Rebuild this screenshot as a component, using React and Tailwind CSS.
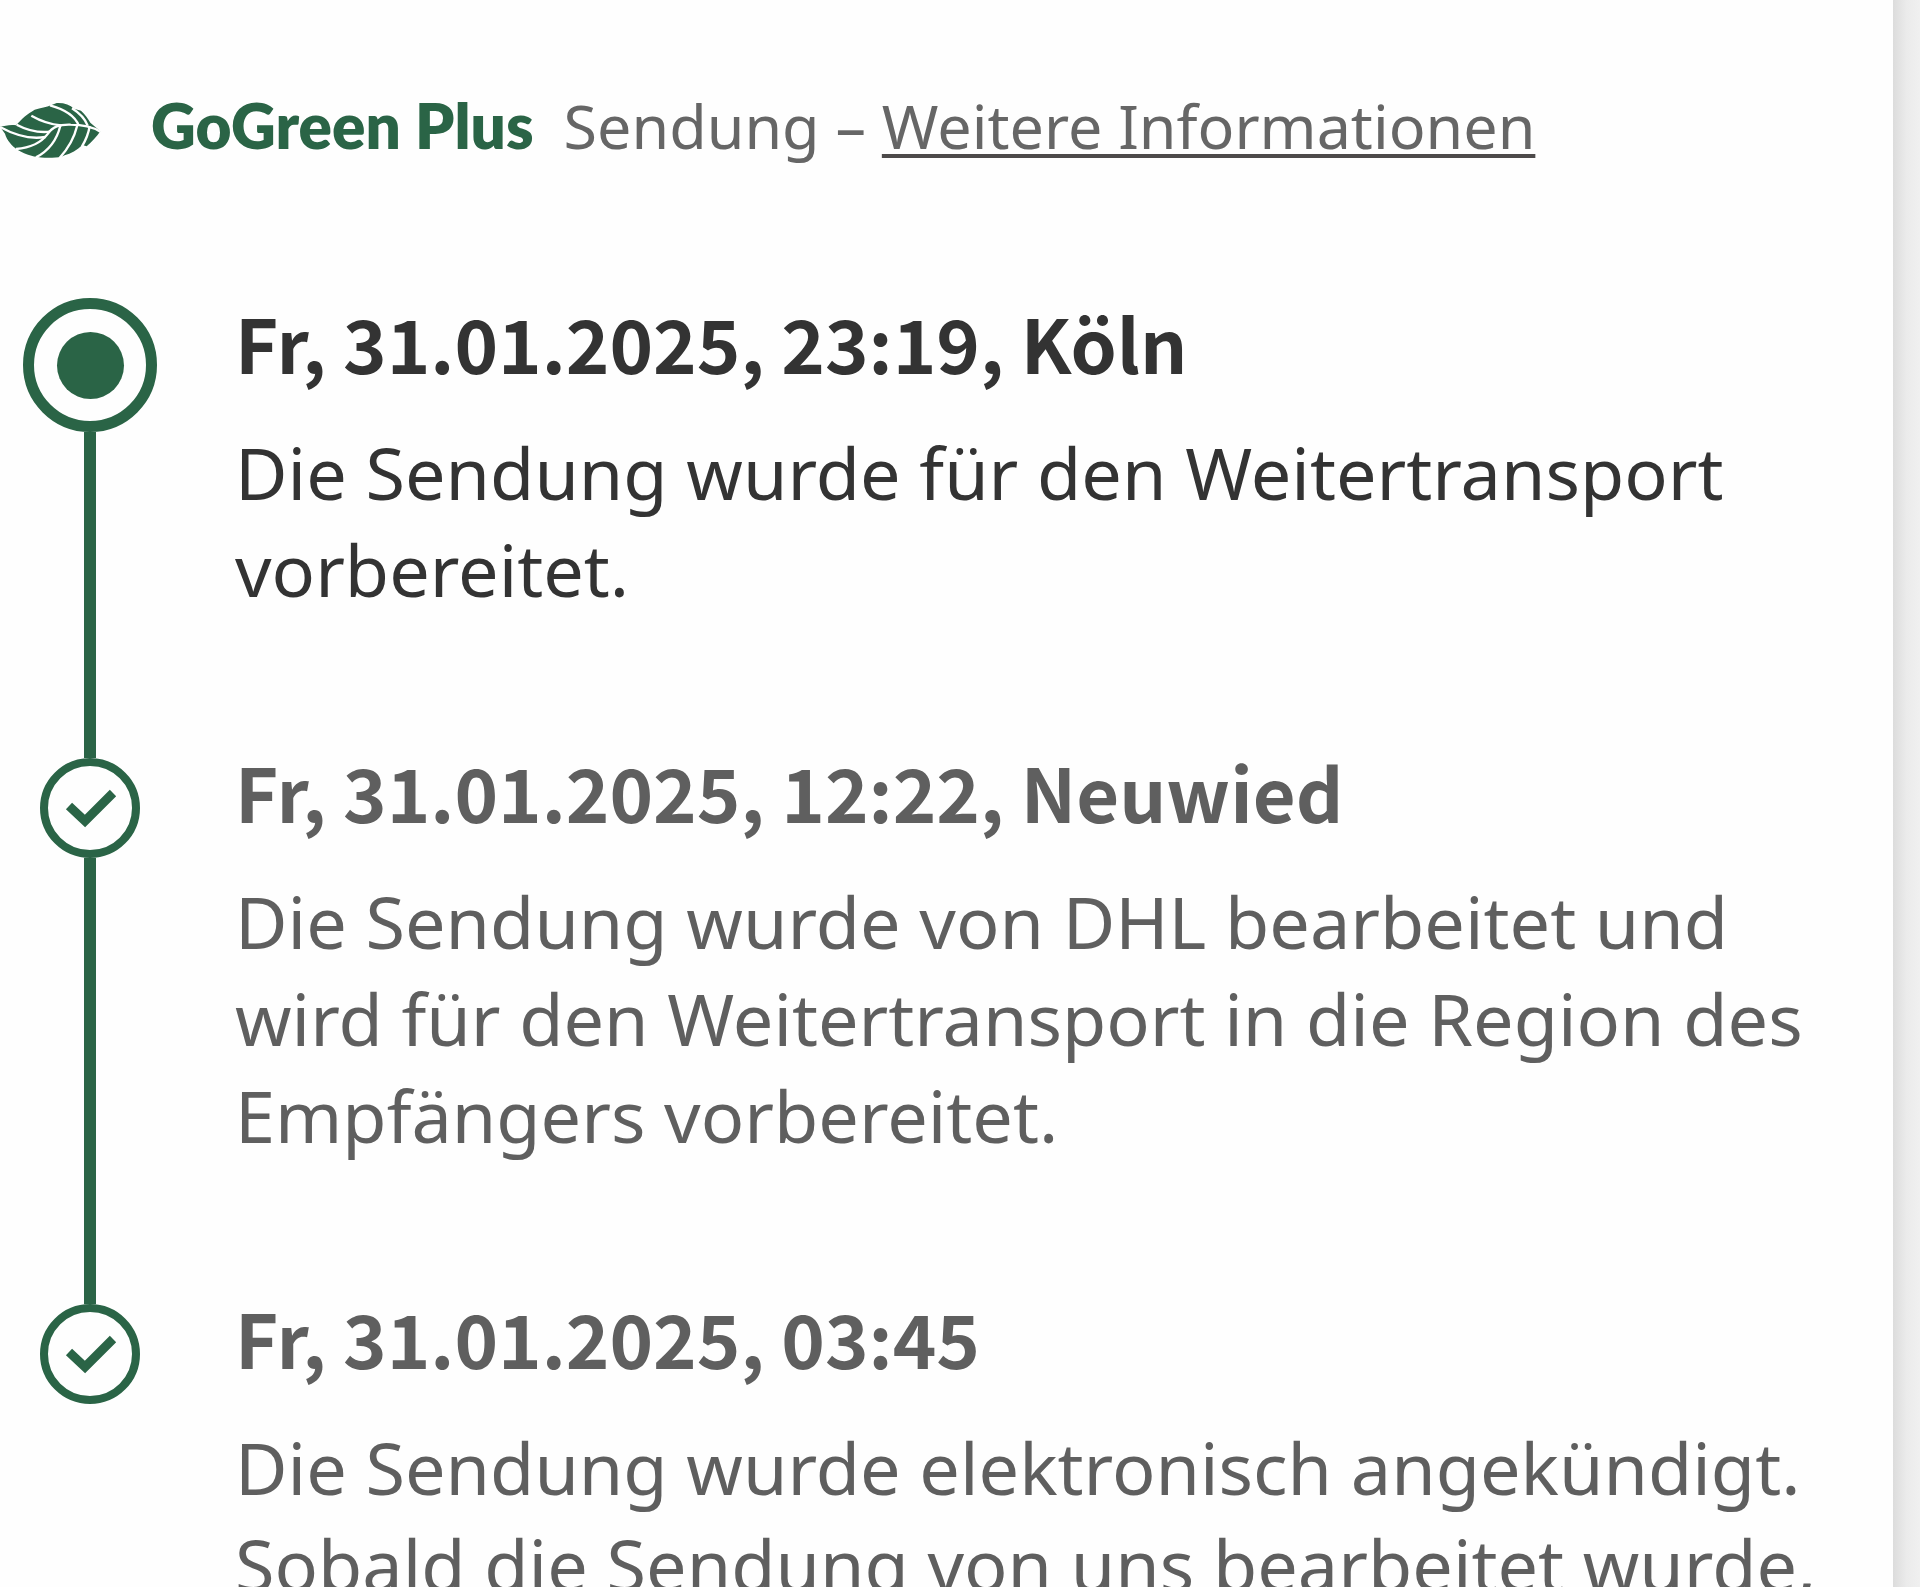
import React from 'react';

const events = [
  {
    time: 'Fr, 31.01.2025, 23:19, Köln',
    text: 'Die Sendung wurde für den Weitertransport vorbereitet.',
    current: true,
  },
  {
    time: 'Fr, 31.01.2025, 12:22, Neuwied',
    text: 'Die Sendung wurde von DHL bearbeitet und wird für den Weitertransport in die Region des Empfängers vorbereitet.',
  },
  {
    time: 'Fr, 31.01.2025, 03:45',
    text: 'Die Sendung wurde elektronisch angekündigt. Sobald die Sendung von uns bearbeitet wurde,',
  },
];

function Leaf() {
  return (
    <svg viewBox="0 37 303 171" className="mt-2.5 h-[57px] w-[101px] shrink-0" aria-hidden="true">
      <path
        fill="#2a6446"
        d="M0 111C14 109 30 104 48 107C66 86 82 73 104 60C122 55 140 52 153 47L170 40C192 39 210 45 222 57L243 63C256 74 264 88 271 99L301 125C290 141 276 156 260 170L247 166C232 181 212 192 194 197C180 205 160 205 142 204C112 206 78 196 55 182C34 168 20 150 15 132Z"
      />
      <g fill="none" stroke="#fff" strokeWidth="7">
        <path d="M48 178C92 174 124 158 142 134C158 110 178 104 212 105C246 105 276 111 301 126" />
        <path d="M0 112C36 132 88 150 136 142" />
        <path d="M50 105C78 120 112 130 150 126" />
        <path d="M94 78C120 93 150 104 184 107" />
        <path d="M150 47C190 58 224 76 236 107" />
        <path d="M216 56C238 70 254 84 263 108" />
        <path d="M108 203C144 184 170 154 181 108" />
        <path d="M178 206C204 178 222 148 232 107" />
        <path d="M246 170C258 150 266 130 269 109" />
      </g>
    </svg>
  );
}

function Marker({ current }) {
  if (current) {
    return (
      <div className="flex size-[134px] shrink-0 items-center justify-center rounded-full border-[11px] border-[#2a6446]">
        <div className="size-[67px] rounded-full bg-[#2a6446]" />
      </div>
    );
  }
  return (
    <div className="flex size-[100px] shrink-0 items-center justify-center rounded-full border-[8px] border-[#2a6446]">
      <svg viewBox="0 0 84 84" className="size-[84px]" aria-hidden="true">
        <path
          d="M21 40L37 55L65 27"
          fill="none"
          stroke="#2a6446"
          strokeWidth="9"
        />
      </svg>
    </div>
  );
}

export default function App() {
  return (
    <div className="flex h-screen overflow-hidden bg-[#fefefe] font-['Noto_Sans',sans-serif]">
      <main className="min-w-0 flex-1 pt-[77px]">

        {/* GoGreen */}
        <div className="flex items-center text-[61px] leading-[97px] text-[#666]">
          <Leaf />
          <strong className="ml-[50px] font-['Lato',sans-serif] text-[62px] font-[800] text-[#2a6446]">GoGreen Plus</strong>
          <p className="ml-[30px]">
            Sendung –{' '}
            <a href="#gogreen" className="underline decoration-[#4d4a4a] decoration-4 underline-offset-[5px] [text-decoration-skip-ink:none]">
              Weitere Informationen
            </a>
          </p>
        </div>

        {/* Sendungsverlauf */}
        <ol className="mt-[119px] pr-16 pl-[23px]">
          {events.map((event, i) => (
            <li key={event.time} className={`flex gap-[78px] ${event.current ? 'text-[#333]' : 'text-[#5f5f5f]'}`}>
              <div className="flex w-[134px] shrink-0 flex-col items-center">
                <div className={event.current ? 'h-[5px]' : 'h-4 w-3 bg-[#2a6446]'} />
                <Marker current={event.current} />
                {i < events.length - 1 && <div className="w-3 flex-1 bg-[#2a6446]" />}
              </div>
              <div className="min-w-0 flex-1 pb-[124px]">
                <h3 className="font-['Noto_Sans_CJK_SC',sans-serif] text-[74px] leading-[97px] font-bold">{event.time}</h3>
                <p className="mt-[34px] text-[72px] leading-[97px]">{event.text}</p>
              </div>
            </li>
          ))}
        </ol>
      </main>
      <div className="w-[27px] shrink-0 bg-linear-to-r from-[#dcdcdc] via-[#ebebeb] to-[#f0f0f0]" />
    </div>
  );
}
